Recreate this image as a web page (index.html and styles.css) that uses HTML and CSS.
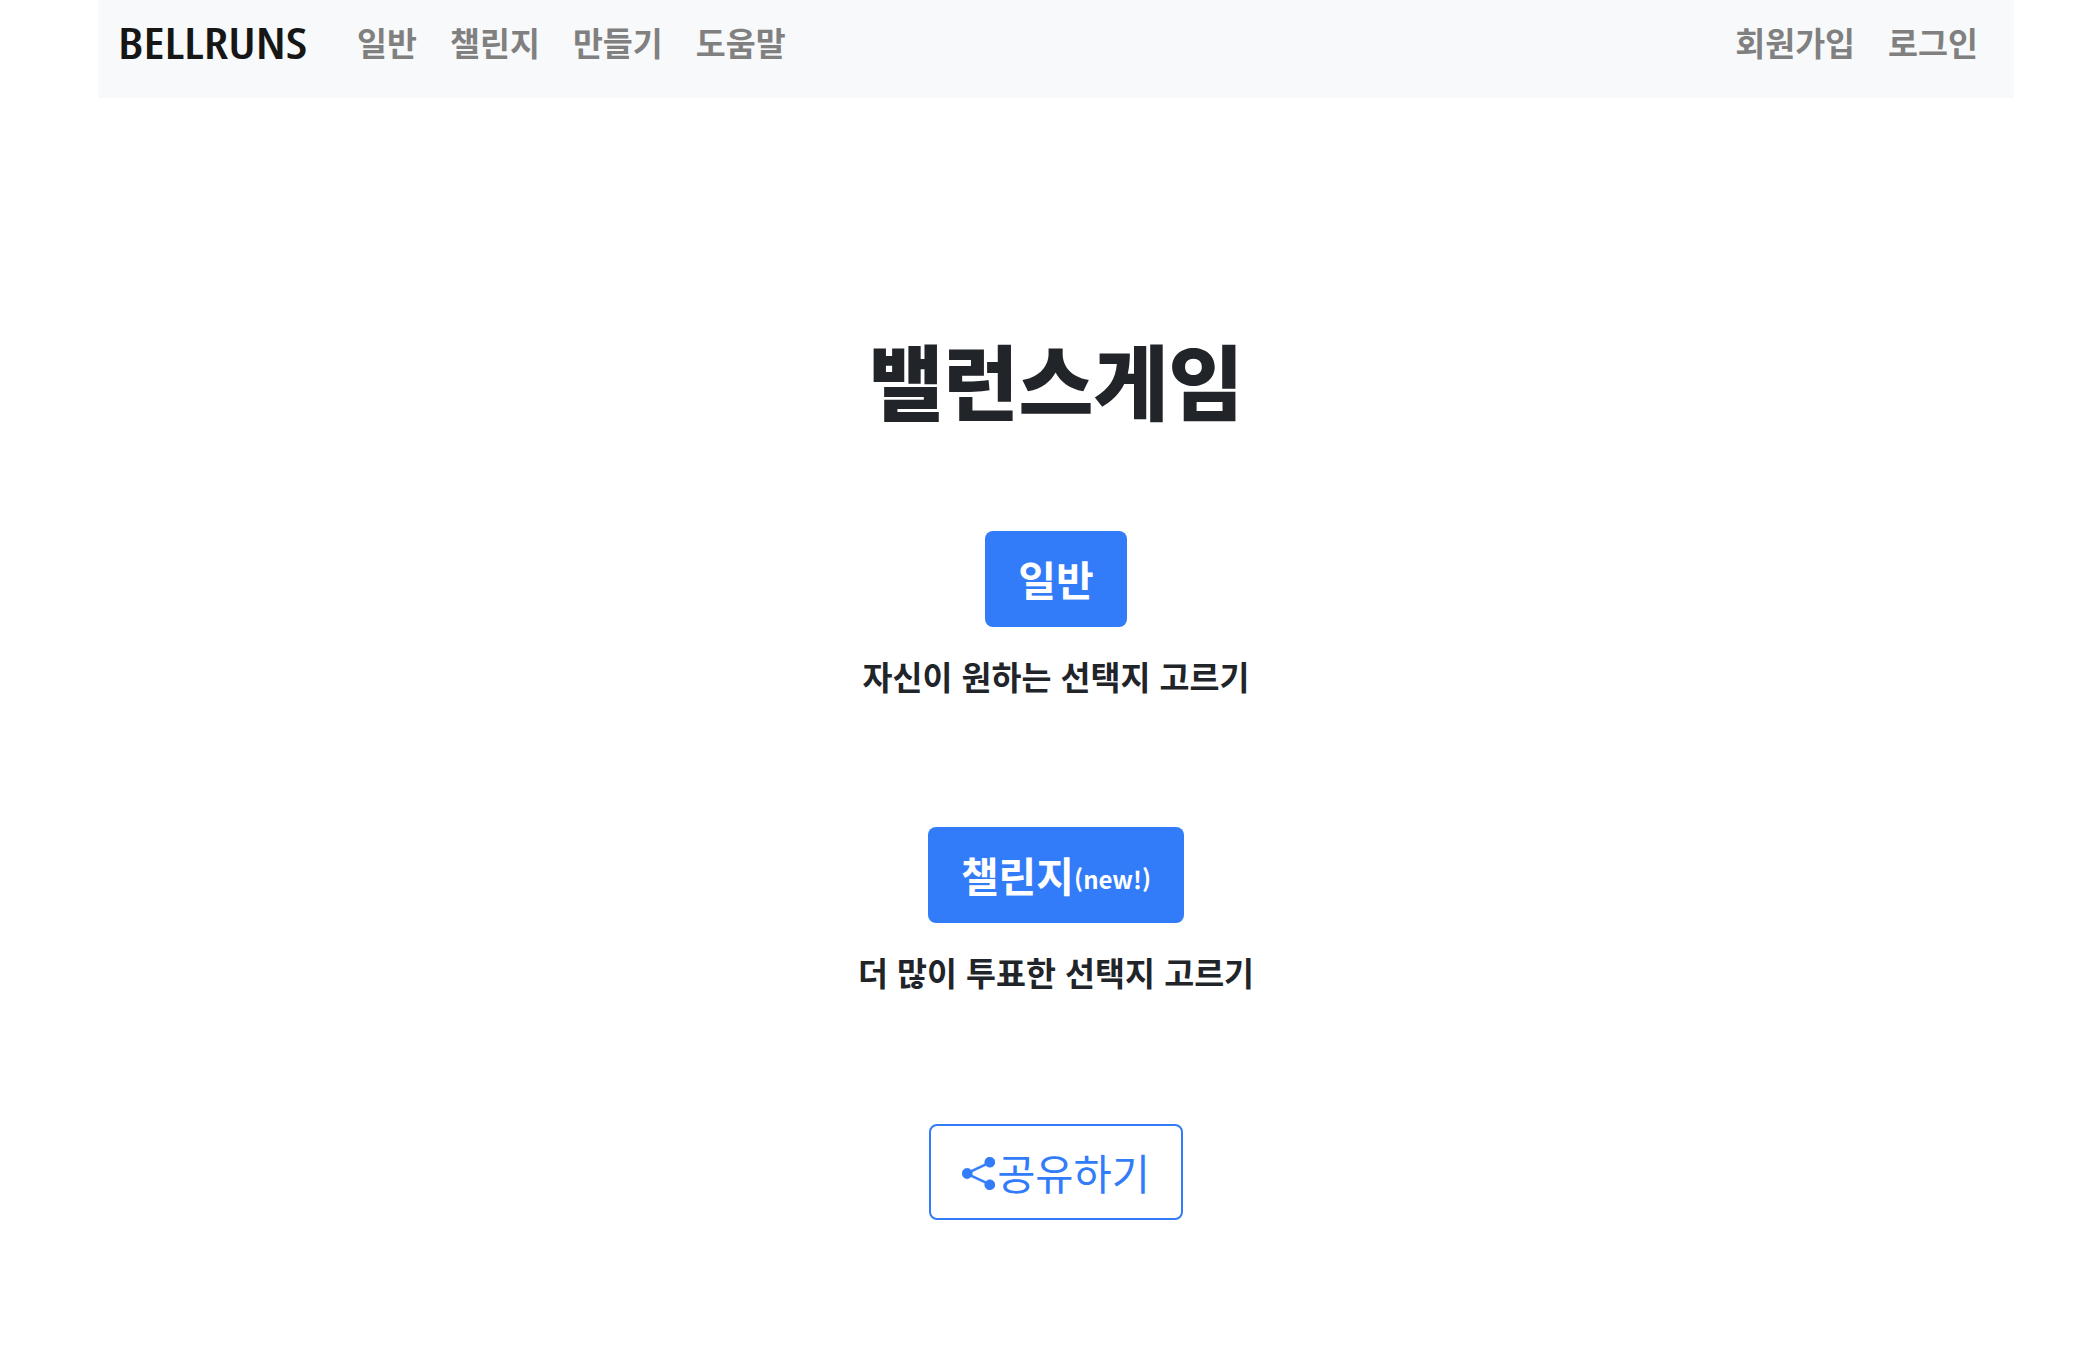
FILE: index.html
```html
<!DOCTYPE html>
<html lang="ko">
<head>
<meta charset="utf-8">
<title>밸런스게임</title>
<link rel="stylesheet" href="styles.css">
</head>
<body>
<div class="page">
  <nav class="navbar">
    <a class="brand" href="#">BELLRUNS</a>
    <ul class="nav-list">
      <li><a href="#">일반</a></li>
      <li><a href="#">챌린지</a></li>
      <li><a href="#">만들기</a></li>
      <li><a href="#">도움말</a></li>
    </ul>
    <ul class="nav-list nav-right">
      <li><a href="#">회원가입</a></li>
      <li><a href="#">로그인</a></li>
    </ul>
  </nav>
  <main class="main">
    <h1 class="title">밸런스게임</h1>
    <section class="choice">
      <a class="btn btn-solid" href="#">일반</a>
      <p class="desc">자신이 원하는 선택지 고르기</p>
    </section>
    <section class="choice">
      <a class="btn btn-solid" href="#">챌린지<small class="new">(new!)</small></a>
      <p class="desc">더 많이 투표한 선택지 고르기</p>
    </section>
    <a class="btn btn-outline" href="#">
      <svg class="share-icon" viewBox="0 0 16 16" fill="currentColor" stroke="currentColor" stroke-width="0.25" aria-hidden="true"><path d="M11 2.5a2.5 2.5 0 1 1 .603 1.628l-6.718 3.12a2.499 2.499 0 0 1 0 1.504l6.718 3.12a2.5 2.5 0 1 1-.488.876l-6.718-3.12a2.5 2.5 0 1 1 0-3.256l6.718-3.12A2.5 2.5 0 0 1 11 2.5z"/></svg>공유하기
    </a>
  </main>
</div>
</body>
</html>
```

FILE: styles.css
```css
* { box-sizing: border-box; }
html, body { margin: 0; padding: 0; background: #fff; }
body {
  font-family: "Noto Sans CJK KR", "Noto Sans", sans-serif;
  color: #212529;
  height: 1372px;
  overflow: hidden;
}
a { text-decoration: none; }
.page { width: 1916px; margin-left: 98px; }
.navbar {
  display: flex;
  align-items: center;
  height: 98px;
  padding: 0 36px 14px 20px;
  background: #f8f9fa;
}
.brand {
  font-family: "Open Sans", "Liberation Sans", sans-serif;
  font-stretch: 75%;
  font-weight: 600;
  font-size: 44px;
  line-height: 60px;
  color: #161616;
  width: 189px;
  flex: none;
  white-space: nowrap;
  transform: scaleX(1.155);
  transform-origin: left center;
  margin-right: 34px;
}
.nav-list {
  display: flex;
  gap: 33px;
  list-style: none;
  margin: 0;
  padding: 0 0 0 16px;
}
.nav-right { margin-left: auto; }
.nav-list a {
  font-size: 32.6px;
  font-weight: 700;
  line-height: 48px;
  color: #808080;
}
.main {
  display: flex;
  flex-direction: column;
  align-items: center;
}
.title {
  margin: 232px 0 0;
  font-size: 81.5px;
  font-weight: 900;
  line-height: 96px;
  color: #212529;
}
.choice {
  display: flex;
  flex-direction: column;
  align-items: center;
}
.choice:first-of-type { margin-top: 105px; }
.choice + .choice { margin-top: 127px; }
.btn {
  display: inline-flex;
  align-items: center;
  justify-content: center;
  height: 96px;
  padding: 0 33px;
  border-radius: 8px;
  font-size: 41px;
  line-height: 60px;
}
.btn-solid {
  background: #337cf9;
  color: #fff;
  font-weight: 700;
  padding-bottom: 2px;
}
.new {
  font-size: 24px;
  font-weight: 700;
  align-self: flex-end;
  line-height: 60px;
  margin-bottom: 12px;
}
.desc {
  margin: 25px 0 0;
  font-size: 32.6px;
  font-weight: 700;
  line-height: 48px;
  color: #212529;
}
.btn-outline {
  margin-top: 128px;
  width: 254px;
  height: 96px;
  padding: 0;
  border: 2px solid #337cf9;
  background: #fff;
  color: #337cf9;
  font-weight: 400;
  font-size: 41.5px;
}
.share-icon { width: 33px; height: 33px; flex: none; margin: 2px 2px 0 0; }
```
